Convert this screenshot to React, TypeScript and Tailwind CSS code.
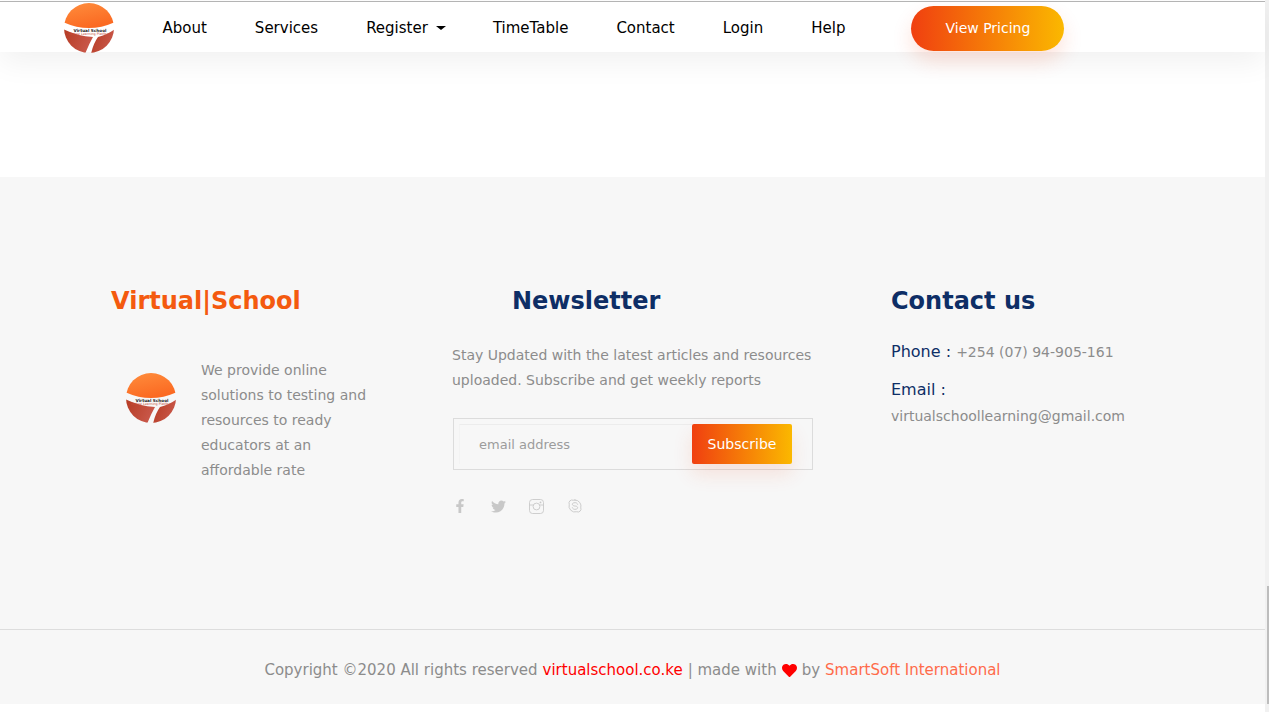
import { FaFacebookF, FaTwitter, FaHeart } from 'react-icons/fa';
import { TbBrandSkype } from 'react-icons/tb';

const font = "font-['DejaVu_Sans',sans-serif]";

function Logo({ id }: { id: string }) {
  return (
    <svg width="52" height="52" viewBox="0 0 52 52" className="block">
      <defs>
        <clipPath id={`${id}-ball`}>
          <circle cx="26" cy="26" r="25" />
        </clipPath>
        <linearGradient id={`${id}-top`} x1="0" y1="0" x2="0.4" y2="1">
          <stop offset="0" stopColor="#ff8f3e" />
          <stop offset="1" stopColor="#fb6a22" />
        </linearGradient>
        <linearGradient id={`${id}-bottom`} x1="0" y1="0" x2="1" y2="0.4">
          <stop offset="0" stopColor="#b53a22" />
          <stop offset="1" stopColor="#c9584a" />
        </linearGradient>
      </defs>
      <g clipPath={`url(#${id}-ball)`}>
        <path d="M0 0 H52 V20 Q26 32 0 20 Z" fill={`url(#${id}-top)`} />
        <path d="M0 27 Q14 34 30 35 Q26 42 22 52 H0 Z" fill={`url(#${id}-bottom)`} />
        <path d="M35 35 Q44 33 52 27 V52 H28 Q30 42 35 35 Z" fill={`url(#${id}-bottom)`} />
      </g>
      <text x="27" y="29.5" textAnchor="middle" fontSize="4.2" fontWeight="700" fill="#222">Virtual School</text>
      <text x="27" y="33" textAnchor="middle" fontSize="3.4" fill="#c8503c">Online Learning Platform</text>
    </svg>
  );
}

function NavLink({ label, caret }: { label: string; caret?: boolean }) {
  return (
    <a className="flex items-center text-black text-[15px]">
      {label}
      {caret && <span className="ml-2 -mr-px w-0 h-0 border-x-[5px] border-x-transparent border-t-[4px] border-t-black" />}
    </a>
  );
}

export default function App() {
  return (
    <div className={`${font} flex w-[1269px] h-[712px] overflow-hidden bg-white`}>
      <div className="w-[1265px] shrink-0">
        <div className="pt-px bg-white">
          <header className="relative z-10 h-[51px] bg-white border-t border-t-[#b4b4b4] shadow-[0_10px_30px_rgba(0,0,0,0.06)] flex items-start pl-[63px]">
            <div className="w-[52px]">
              <Logo id="nav" />
            </div>
            <nav className="flex items-center gap-[48px] ml-[47.5px] h-[52px]">
              <NavLink label="About" />
              <NavLink label="Services" />
              <NavLink label="Register" caret />
              <NavLink label="TimeTable" />
              <NavLink label="Contact" />
              <NavLink label="Login" />
              <NavLink label="Help" />
            </nav>
            <button className="ml-[66px] mt-[4px] w-[153px] h-[45px] rounded-full bg-linear-to-r/srgb from-[#f03f10] to-[#fbb800] text-white text-[14px] shadow-[0_10px_20px_rgba(240,63,16,0.15)]">
              View Pricing
            </button>
          </header>
        </div>

        <div className="h-[125px]" />

        <footer className="bg-[#f7f7f7] h-[527px] flex flex-col">
          <div className="h-[452px] flex pt-[106px]">
            <div className="w-[440px] pl-[111px] shrink-0">
              <h3 className="text-[24px] font-bold leading-[36px] text-[#f45a0f]">Virtual|School</h3>
              <div className="flex mt-[39px] pl-[14px]">
                <div className="mt-[14px] shrink-0">
                  <Logo id="footer" />
                </div>
                <p className="ml-[24px] w-[180px] text-[14px] leading-[25px] text-[#8c8c8c]">
                  We provide online solutions to testing and resources to ready educators at an affordable rate
                </p>
              </div>
            </div>

            <div className="w-[451px] pl-[12px] shrink-0">
              <h3 className="text-[24px] font-bold leading-[36px] text-[#0e2e66] pl-[60px]">Newsletter</h3>
              <p className="mt-[24px] w-[370px] text-[14px] leading-[25px] text-[#8c8c8c]">
                Stay Updated with the latest articles and resources uploaded. Subscribe and get weekly reports
              </p>
              <div className="mt-[25px] ml-px w-[360px] h-[52px] border border-[#dcdcdc] pt-[5px] pl-[5px] flex">
                <div className="w-[233px] h-[40px] border-t border-l border-t-[#ececec] border-l-[#f3f3f3] pl-[19px] flex items-center text-[13px] text-[#9c9c9c]">
                  email address
                </div>
                <button className="w-[100px] h-[40px] rounded-[2px] bg-linear-to-r/srgb from-[#f03f10] to-[#fbb800] text-white text-[14px] shadow-[0_10px_20px_rgba(240,63,16,0.12)]">
                  Subscribe
                </button>
              </div>
              <div className="flex items-center mt-[28px] text-[#c8c8c8] h-[16px]">
                <FaFacebookF className="w-[14px] h-[14px] ml-px" />
                <FaTwitter className="ml-[24px] w-[15px] h-[15px]" />
                <svg width="15" height="15" viewBox="0 0 15 15" fill="none" stroke="currentColor" strokeWidth="0.9" className="ml-[23px]">
                  <rect x="0.5" y="0.5" width="14" height="14" rx="3" />
                  <circle cx="7.5" cy="7.5" r="3.4" />
                  <path d="M0.5 6 H4.4 M10.6 6 H14.5" />
                  <circle cx="11.5" cy="3.4" r="0.9" fill="currentColor" stroke="none" />
                </svg>
                <TbBrandSkype className="ml-[23px] w-[16px] h-[16px]" strokeWidth={1.4} />
              </div>
            </div>

            <div className="flex-1">
              <h3 className="text-[24px] font-bold leading-[36px] text-[#0e2e66]">Contact us</h3>
              <p className="mt-[21px] leading-[24px] text-[16px] text-[#0e2e66]">
                Phone : <span className="text-[14px] text-[#8c8c8c]">+254 (07) 94-905-161</span>
              </p>
              <p className="mt-[14px] leading-[24px] text-[16px] text-[#0e2e66]">Email :</p>
              <p className="mt-[2px] leading-[25px] text-[14px] text-[#8c8c8c]">virtualschoollearning@gmail.com</p>
            </div>
          </div>
          <div className="flex-1 border-t border-[#dddddd] flex items-center justify-center text-[15px] text-[#8c8c8c] pt-[6px]">
            <span>Copyright ©2020 All rights reserved</span>
            <span className="text-[#ff0000] ml-[5px]">virtualschool.co.ke</span>
            <span className="ml-[5px]">| made with</span>
            <FaHeart className="mx-[5px] w-[15px] h-[15px] text-[#ff0000]" />
            <span>by</span>
            <span className="text-[#ff6b4a] ml-[5px]">SmartSoft International</span>
          </div>
        </footer>
      </div>

      <div className="w-[4px] h-full bg-[#f1f1f1] pt-[586px] pl-[2px]">
        <div className="w-[2px] h-[118px] bg-[#bdbdbd]" />
      </div>
    </div>
  );
}
